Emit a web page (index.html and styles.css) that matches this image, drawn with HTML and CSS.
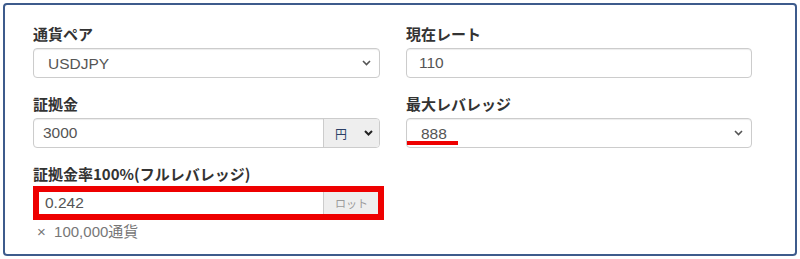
FILE: index.html
```html
<!DOCTYPE html>
<html>
  <head>
    <title>ロット計算</title>
    <link rel="stylesheet" href="styles.css">
  </head>
  <body>
    <div class="panel">
      <div class="form-grid">
        <div class="field">
          <label class="field-label">通貨ペア</label>
          <div class="select-box">
            <select class="select">
              <option>USDJPY</option>
            </select>
            <svg class="chevron" width="9" height="6" viewBox="0 0 9 6"><path d="M1 1L4.5 4.5L8 1"/></svg>
          </div>
        </div>
        <div class="field">
          <label class="field-label">現在レート</label>
          <input class="input" type="text" value="110">
        </div>

        <div class="field">
          <label class="field-label">証拠金</label>
          <div class="input-group">
            <input class="input-flat pad-small" type="text" value="3000">
            <div class="addon">
              <span class="addon-text">円</span>
              <svg class="chevron dark" width="9" height="6" viewBox="0 0 9 6"><path d="M1 1L4.5 4.5L8 1"/></svg>
            </div>
          </div>
        </div>
        <div class="field">
          <label class="field-label">最大レバレッジ</label>
          <div class="select-box">
            <select class="select">
              <option>888</option>
            </select>
            <svg class="chevron" width="9" height="6" viewBox="0 0 9 6"><path d="M1 1L4.5 4.5L8 1"/></svg>
            <!-- annotation underline -->
            <div class="underline"></div>
          </div>
        </div>

        <div class="field">
          <label class="field-label">証拠金率100%(フルレバレッジ)</label>
          <div class="input-group">
            <input class="input-flat" type="text" value="0.242">
            <div class="addon addon-muted">ロット</div>
            <!-- annotation box -->
            <div class="highlight"></div>
          </div>
          <p class="help">×&nbsp; 100,000通貨</p>
        </div>
      </div>
    </div>
  </body>
</html>
```

FILE: styles.css
```css
body {
  margin: 0;
  background-color: #ffffff;
  font-family: "Liberation Sans", "Noto Sans CJK JP", sans-serif;
}

/* outer frame */
.panel {
  margin: 3px;
  height: 253px;
  box-sizing: border-box;
  border: 2px solid #3d5b8c;
  border-radius: 4px;
  padding: 19px 43px 0 28px;
}

.form-grid {
  display: grid;
  grid-template-columns: 347px 346px;
  column-gap: 26px;
  row-gap: 16px;
  align-items: start;
}

.field-label {
  display: block;
  margin-bottom: 4px;
  font-family: "Noto Sans CJK JP", sans-serif;
  font-size: 15px;
  font-weight: bold;
  line-height: 20px;
  color: #333333;
}

/* text inputs */
.input {
  display: block;
  width: 100%;
  height: 30px;
  box-sizing: border-box;
  padding: 0 12px;
  border: 1px solid #cccccc;
  border-radius: 4px;
  box-shadow: inset 0 1px 1px rgba(0, 0, 0, 0.075);
  font-family: inherit;
  font-size: 15.5px;
  color: #555555;
  background-color: #ffffff;
  outline: none;
}

/* select with custom arrow */
.select-box {
  position: relative;
  display: flex;
  align-items: center;
  height: 30px;
  box-sizing: border-box;
  border: 1px solid #cccccc;
  border-radius: 4px;
  box-shadow: inset 0 1px 1px rgba(0, 0, 0, 0.075);
  background-color: #ffffff;
}

.select {
  flex: 1;
  appearance: none;
  -webkit-appearance: none;
  border: none;
  background: transparent;
  padding: 0 14px;
  height: 28px;
  font-family: inherit;
  font-size: 15.5px;
  color: #555555;
  outline: none;
}

.chevron {
  flex: none;
  margin-right: 8px;
  fill: none;
  stroke: #555555;
  stroke-width: 1.6;
}

.chevron.dark {
  margin-right: 0;
  stroke: #222222;
  stroke-width: 2;
}

/* input with addon on the right */
.input-group {
  position: relative;
  display: flex;
  height: 30px;
  box-sizing: border-box;
  border: 1px solid #cccccc;
  border-radius: 4px;
  box-shadow: inset 0 1px 1px rgba(0, 0, 0, 0.075);
  background-color: #ffffff;
}

.input-flat {
  flex: 1;
  min-width: 0;
  border: none;
  background: transparent;
  padding: 0 11px;
  font-family: inherit;
  font-size: 15.5px;
  color: #555555;
  outline: none;
}

.input-flat.pad-small {
  padding-left: 9px;
}

.addon {
  flex: none;
  width: 56px;
  box-sizing: border-box;
  display: flex;
  align-items: center;
  justify-content: space-between;
  padding: 0 6px 0 11px;
  border-left: 1px solid #cccccc;
  border-radius: 0 3px 3px 0;
  background-color: #eeeeee;
}

.addon-text {
  font-family: "Noto Sans CJK JP", sans-serif;
  font-size: 12px;
  color: #2b3f66;
}

.addon-muted {
  justify-content: center;
  padding: 0;
  font-family: "Noto Sans CJK JP", sans-serif;
  font-size: 11px;
  color: #9a9a9a;
}

.help {
  margin: 4px 0 0 4px;
  font-size: 15px;
  line-height: 20px;
  color: #777777;
}

/* red annotations drawn over the form */
.highlight {
  position: absolute;
  left: -1px;
  top: -3px;
  width: 351px;
  height: 34px;
  box-sizing: border-box;
  border: 6px solid #ee0000;
}

.underline {
  position: absolute;
  left: 0;
  top: 22px;
  width: 51px;
  height: 4px;
  background-color: #ee0000;
}
```
